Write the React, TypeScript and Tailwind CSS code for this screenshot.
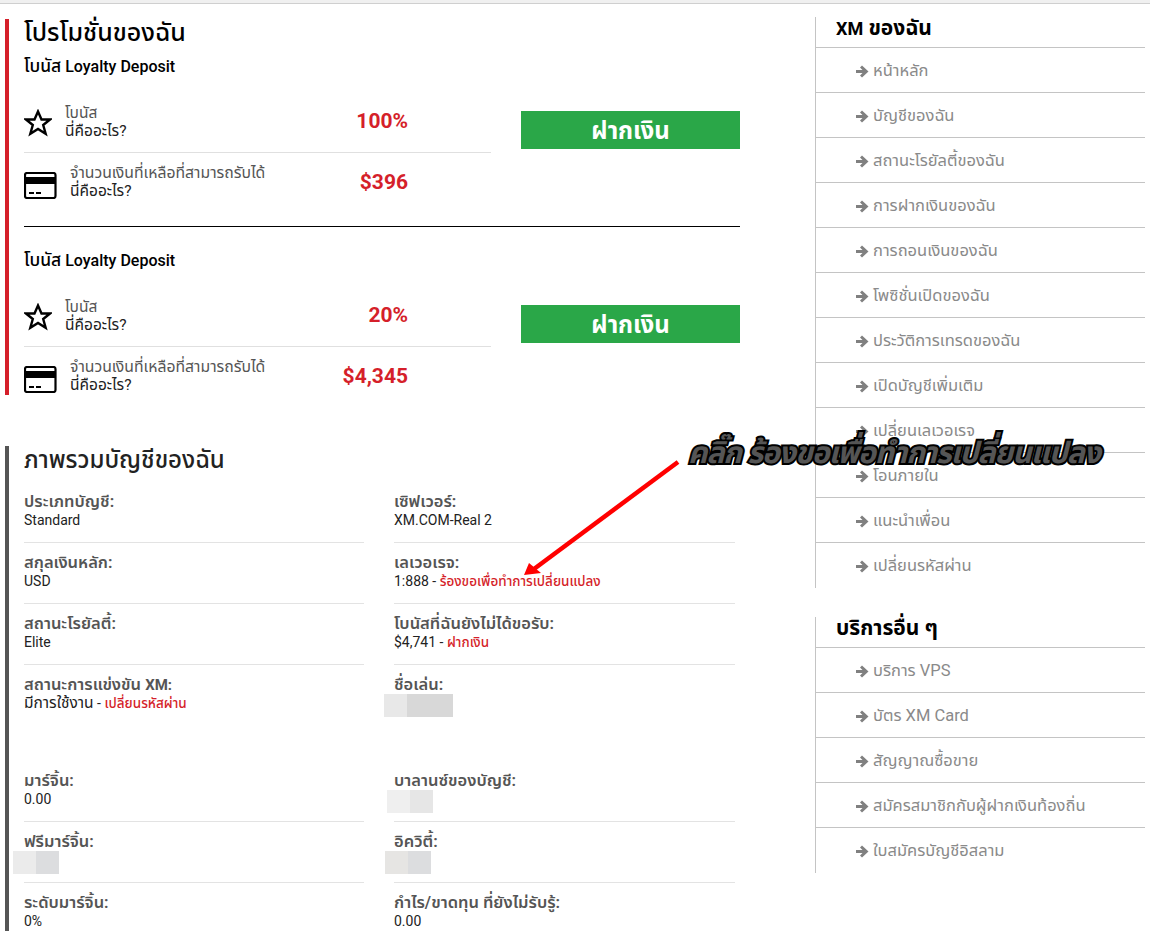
import React from "react";

const font = "font-['Roboto','Noto_Sans','Noto_Sans_Thai','DejaVu_Sans',sans-serif]";

const menuMain = [
  "หน้าหลัก",
  "บัญชีของฉัน",
  "สถานะโรยัลตี้ของฉัน",
  "การฝากเงินของฉัน",
  "การถอนเงินของฉัน",
  "โพซิชั่นเปิดของฉัน",
  "ประวัติการเทรดของฉัน",
  "เปิดบัญชีเพิ่มเติม",
  "เปลี่ยนเลเวอเรจ",
  "โอนภายใน",
  "แนะนำเพื่อน",
  "เปลี่ยนรหัสผ่าน",
];

const menuOther = [
  "บริการ VPS",
  "บัตร XM Card",
  "สัญญาณซื้อขาย",
  "สมัครสมาชิกกับผู้ฝากเงินท้องถิ่น",
  "ใบสมัครบัญชีอิสลาม",
];

function StarIcon() {
  return (
    <svg width="28" height="28" viewBox="0 0 28 28" className="mt-[2px] shrink-0">
      <path
        d="M14 2.500l3.500 8h8.500l-6.800 5.500 2.500 8.800-7.700-4.800-7.700 4.800 2.500-8.800-6.800-5.500h8.500z"
        fill="none"
        stroke="#000"
        strokeWidth="2.400"
      />
    </svg>
  );
}

function CardIcon() {
  return (
    <svg width="33" height="27" viewBox="0 0 33 27" className="mt-[6px] shrink-0">
      <rect x="1" y="1" width="30.500" height="25" rx="2" fill="none" stroke="#000" strokeWidth="2.200" />
      <rect x="1" y="5" width="30.500" height="7" fill="#000" />
      <rect x="5" y="20" width="5" height="2" fill="#000" />
      <rect x="12" y="20" width="5" height="2" fill="#000" />
    </svg>
  );
}

function ArrowIcon() {
  return (
    <svg width="13" height="13" viewBox="0 0 13 13" className="mr-[4px] shrink-0">
      <path d="M0 5h6.500L4 2.500 6 0.500 12.500 6.500 6 12.500 4 10.500 6.500 8H0z" fill="#808080" />
    </svg>
  );
}

function Subtitle() {
  return (
    <h2 className="text-[16px] leading-[20px] font-medium text-black">
      <span className="text-[17.5px]">โบนัส</span> Loyalty Deposit
    </h2>
  );
}

function BonusBlock({ percent, amount }: { percent: string; amount: string }) {
  return (
    <div className="flex items-start">
      <div className="w-[467px]">
        <div className="flex h-[71px] items-center border-b border-[#e0e0e0] pt-[9px]">
          <StarIcon />
          <div className="ml-[13px] text-[15.5px] leading-[18px]">
            <div className="text-[#555]">โบนัส</div>
            <div className="text-[#222]">นี่คืออะไร?</div>
          </div>
          <div className="mr-[83px] ml-auto text-[21px] font-bold text-[#d51f2a]">{percent}</div>
        </div>
        <div className="flex h-[58px] items-center">
          <CardIcon />
          <div className="ml-[13px] text-[15.75px] leading-[18px]">
            <div className="text-[#555]">จำนวนเงินที่เหลือที่สามารถรับได้</div>
            <div className="text-[15.5px] text-[#222]">นี่คืออะไร?</div>
          </div>
          <div className="mt-[2px] mr-[83px] ml-auto text-[21px] font-bold text-[#d51f2a]">{amount}</div>
        </div>
      </div>
      <div className="mt-[29px] ml-[30px] flex h-[38px] w-[219px] items-center justify-center bg-[#2aa748] pt-[2px] text-[24px] font-bold text-white">
        ฝากเงิน
      </div>
    </div>
  );
}

function Blur({ a, b, offset }: { a: string; b: string; offset: string }) {
  return (
    <div className={`flex h-[23px] ${offset}`}>
      <div className={`w-[23px] ${a}`}></div>
      <div className={`w-[23px] ${b}`}></div>
    </div>
  );
}

function InfoCell({
  label,
  children,
  line = true,
}: {
  label: React.ReactNode;
  children: React.ReactNode;
  line?: boolean;
}) {
  return (
    <div className={`h-[61px] pt-[11px] ${line ? "border-b border-[#e3e3e3]" : ""}`}>
      <div className="text-[16.5px] leading-[18px] font-semibold text-[#555]">{label}</div>
      <div className="text-[14px] leading-[18px] text-[#222]">{children}</div>
    </div>
  );
}

function Link({ children }: { children: React.ReactNode }) {
  return <span className="text-[13.5px] font-medium text-[#d51f2a]">{children}</span>;
}

function SideMenu({ title, items }: { title: React.ReactNode; items: string[] }) {
  return (
    <div className="border-l border-[#c4c4c4]">
      <div className="h-[31px] border-b border-[#c4c4c4] pl-[20px] text-[21px] leading-[22px] font-bold text-black">
        {title}
      </div>
      {items.map((item) => (
        <div
          key={item}
          className="flex h-[45px] items-center border-b border-[#c4c4c4] pt-[2px] pl-[40px] text-[16.5px] text-[#8a8a8a] last:border-b-0"
        >
          <ArrowIcon />
          {item}
        </div>
      ))}
    </div>
  );
}

export default function App() {
  return (
    <main className={`relative h-[931px] w-full overflow-hidden bg-white ${font}`}>
      <div className="h-[4px] border-b border-[#cfcfcf] bg-[#f0f0f0]"></div>

      <div className="flex">
        <div className="ml-[5px] w-[810px] shrink-0">
          <section className="mt-[15px] h-[376px] w-[735px] border-l-4 border-[#d51f2a] pl-[15px]">
            <h1 className="pt-[1px] text-[25px] leading-[26px] font-medium text-black">โปรโมชั่นของฉัน</h1>
            <div className="mt-[10px]">
              <Subtitle />
            </div>
            <div className="mt-[5px]">
              <BonusBlock percent="100%" amount="$396" />
            </div>
            <div className="mt-[15px] border-t border-black pt-[23px]">
              <Subtitle />
              <div className="mt-[5px]">
                <BonusBlock percent="20%" amount="$4,345" />
              </div>
            </div>
          </section>

          <section className="mt-[51px] h-[500px] w-[735px] border-l-4 border-[#555] pl-[15px]">
            <h1 className="pt-[1px] text-[24px] leading-[26px] font-medium text-[#222]">ภาพรวมบัญชีของฉัน</h1>
            <div className="mt-[9px] grid w-[711px] grid-cols-[340px_341px] gap-x-[30px]">
              <InfoCell label="ประเภทบัญชี:">Standard</InfoCell>
              <InfoCell label="เซิฟเวอร์:">XM.COM-Real 2</InfoCell>
              <InfoCell label="สกุลเงินหลัก:">USD</InfoCell>
              <InfoCell label="เลเวอเรจ:">
                1:888 - <Link>ร้องขอเพื่อทำการเปลี่ยนแปลง</Link>
              </InfoCell>
              <InfoCell label="สถานะโรยัลตี้:">Elite</InfoCell>
              <InfoCell label="โบนัสที่ฉันยังไม่ได้ขอรับ:">
                $4,741 - <Link>ฝากเงิน</Link>
              </InfoCell>
              <div className="h-[96px]">
                <InfoCell
                  label={
                    <>
                      สถานะการแข่งขัน <span className="text-[15px] font-bold">XM:</span>
                    </>
                  }
                  line={false}
                >
                  <span className="text-[15.5px]">มีการใช้งาน</span> - <Link>เปลี่ยนรหัสผ่าน</Link>
                </InfoCell>
              </div>
              <div className="h-[96px]">
                <InfoCell label="ชื่อเล่น:" line={false}>
                  <Blur a="bg-[#e8e8e8]" b="w-[46px] bg-[#d8d8d8]" offset="-ml-[10px]" />
                </InfoCell>
              </div>
              <InfoCell label="มาร์จิ้น:">0.00</InfoCell>
              <InfoCell label="บาลานซ์ของบัญชี:">
                <Blur a="bg-[#efefef]" b="bg-[#e6e6e6]" offset="-ml-[7px]" />
              </InfoCell>
              <InfoCell label="ฟรีมาร์จิ้น:">
                <Blur a="bg-[#ebebeb]" b="bg-[#dcdddf]" offset="-ml-[11px]" />
              </InfoCell>
              <InfoCell label="อิควิตี้:">
                <Blur a="bg-[#e6e5e3]" b="bg-[#dcdddf]" offset="-ml-[9px]" />
              </InfoCell>
              <InfoCell label="ระดับมาร์จิ้น:" line={false}>0%</InfoCell>
              <InfoCell label="กำไร/ขาดทุน ที่ยังไม่รับรู้:" line={false}>0.00</InfoCell>
            </div>
          </section>
        </div>

        <aside className="mt-[13px] w-[330px] shrink-0">
          <SideMenu
            title={
              <>
                <span className="text-[18px]">XM</span> ของฉัน
              </>
            }
            items={menuMain}
          />
          <div className="mt-[29px]">
            <SideMenu title="บริการอื่น ๆ" items={menuOther} />
          </div>
        </aside>
      </div>

      {/* annotation on top of the page */}
      <svg className="absolute top-0 left-0" width="1150" height="931" viewBox="0 0 1150 931">
        <path d="M678 462L534 569" stroke="#f00" strokeWidth="4.500" fill="none" />
        <path d="M524 575L529 563L541 573z" fill="#f00" />
      </svg>
      <div className="absolute top-[430px] left-[688px] text-[30px] leading-[46px] font-bold tracking-[-1px] whitespace-nowrap text-[#555] italic [-webkit-text-stroke:4px_#000] [paint-order:stroke_fill]">
        คลิ๊ก ร้องขอเพื่อทำการเปลี่ยนแปลง
      </div>
    </main>
  );
}
